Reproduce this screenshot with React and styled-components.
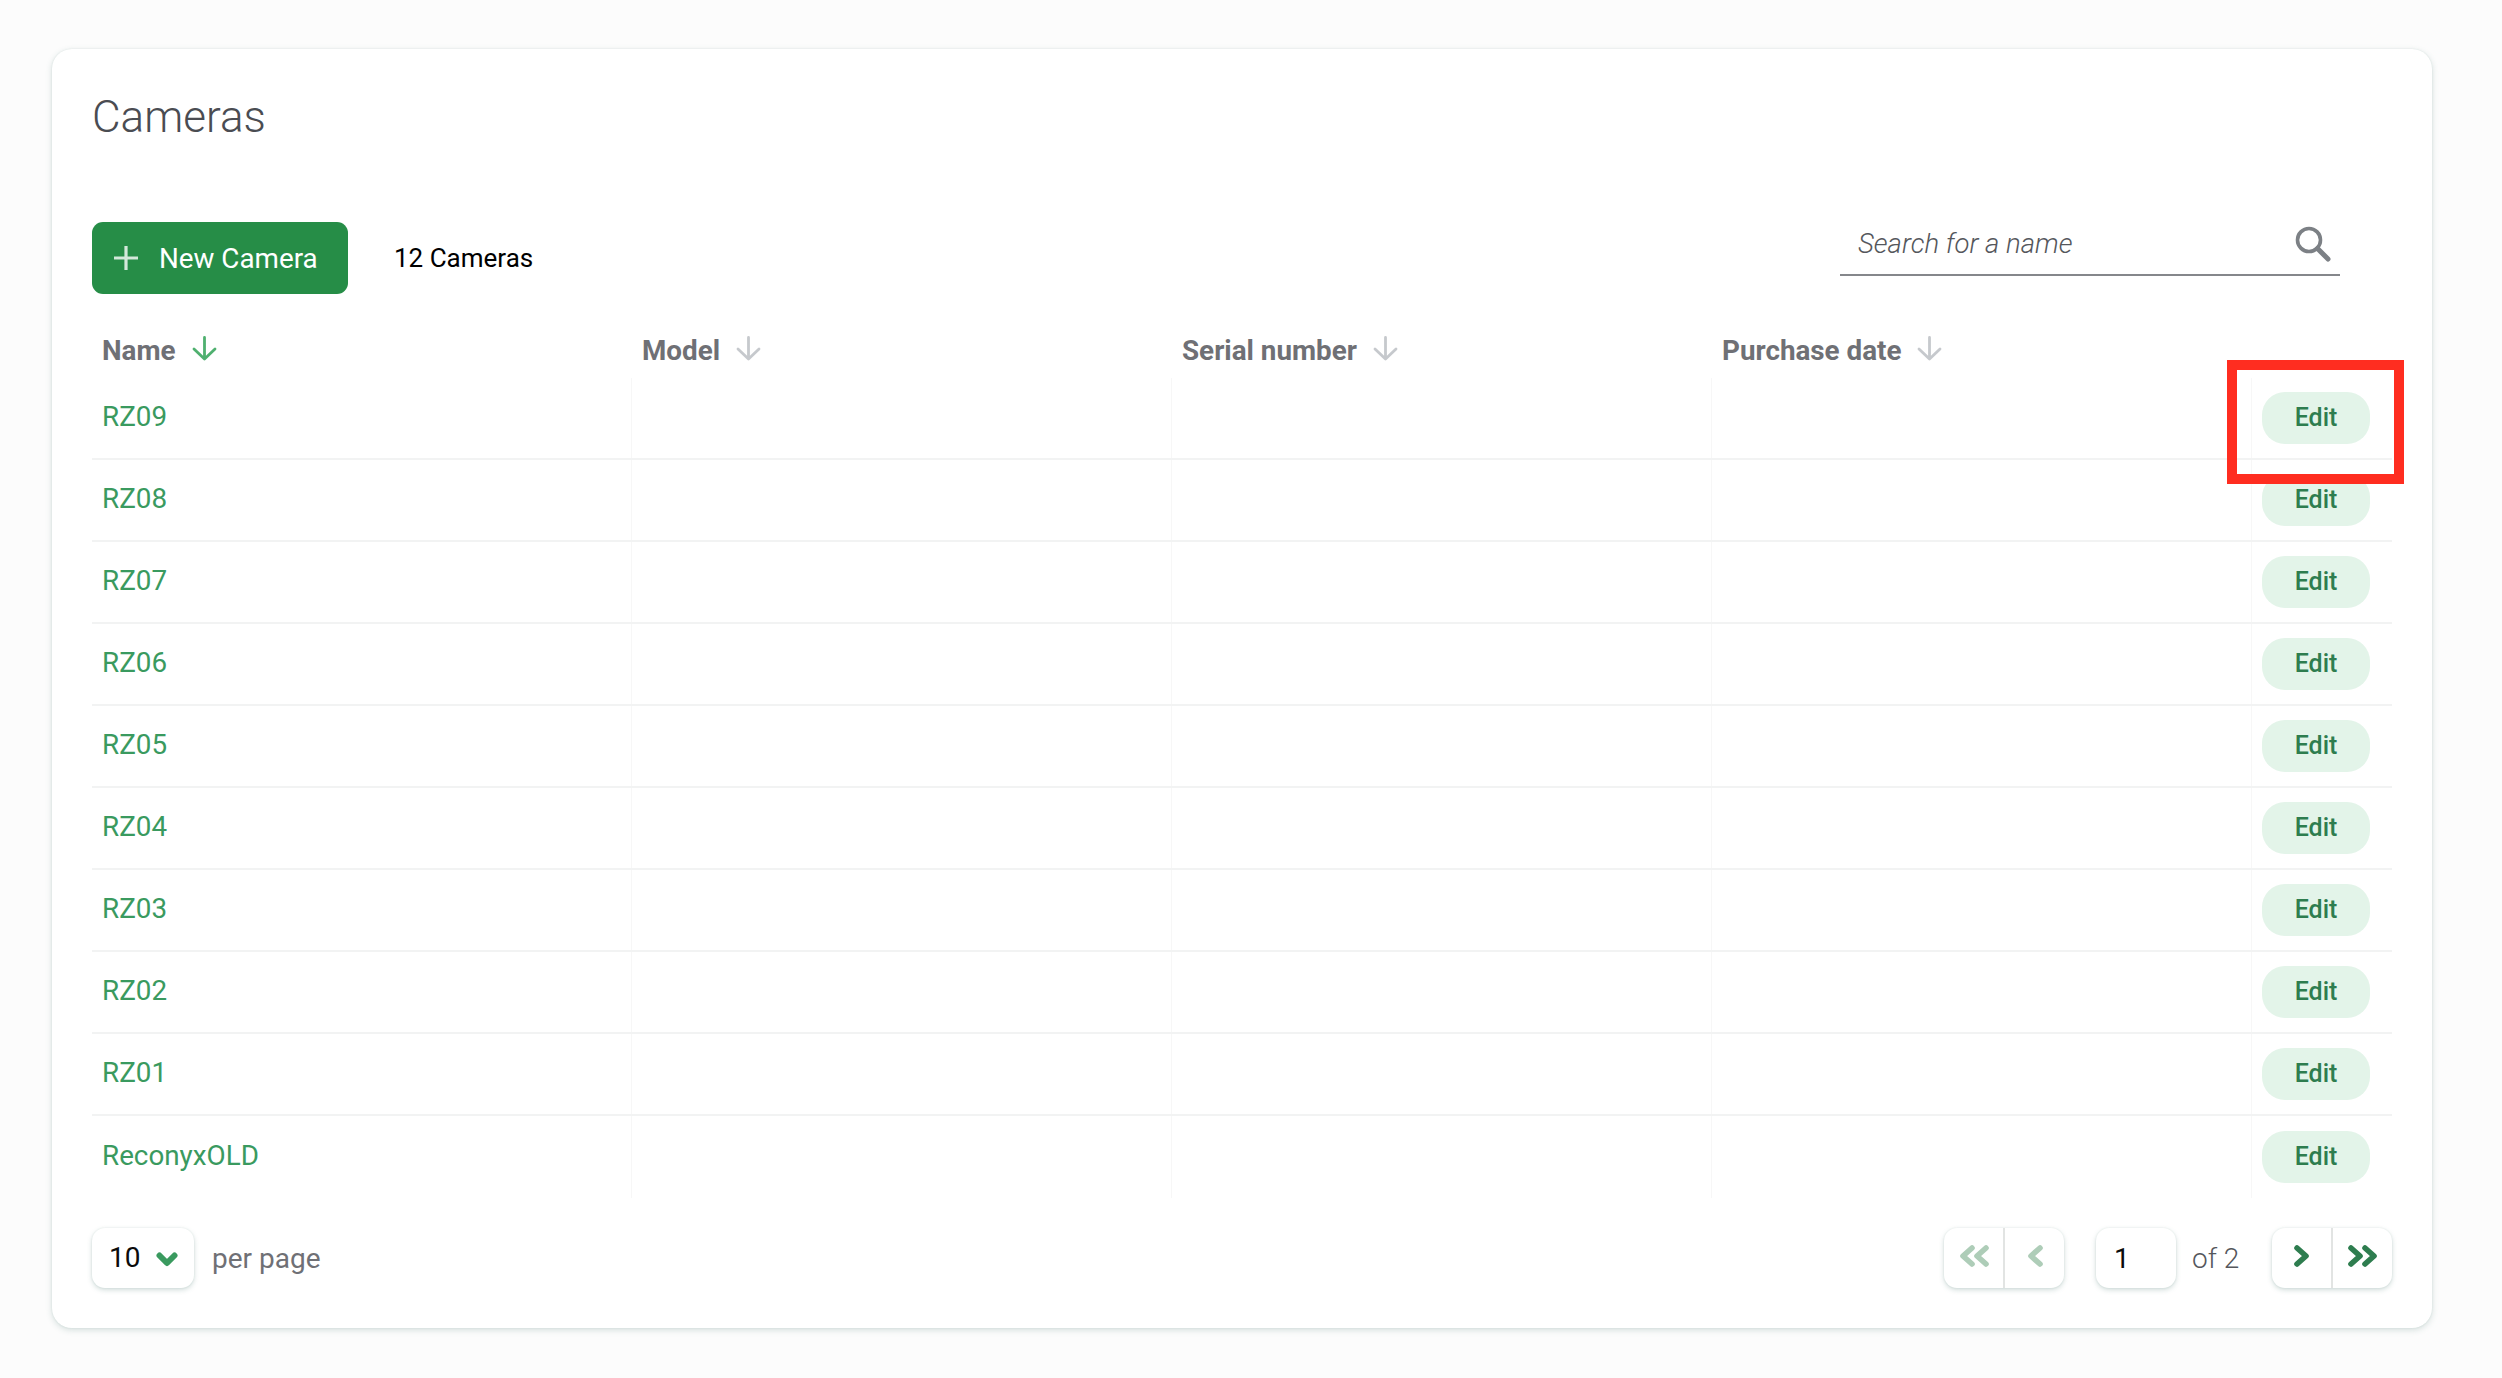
import React from "react";
import styled, { createGlobalStyle } from "styled-components";

const Global = createGlobalStyle`
  html, body { margin: 0; padding: 0; background: #fcfcfc; }
  body { font-family: Roboto, "Liberation Sans", sans-serif; }
`;
const COLUMNS = "539px 540px 540px 540px 141px";
const Page = styled.div`
  width: 2502px; height: 1378px; box-sizing: border-box; padding: 49px 70px 50px 52px; position: relative; overflow: hidden;
`;
const Card = styled.section`
  width: 2380px; height: 1279px; box-sizing: border-box; padding: 40px 40px 40px 40px; background: #fff; border-radius: 20px;
  box-shadow: 0 2px 6px rgba(70, 120, 110, 0.22), 0 0 2px rgba(70, 120, 110, 0.12);
`;
const Title = styled.h1`
  margin: 0 0 77px; height: 56px; line-height: 56px; font-size: 44px; font-weight: 300; color: #4a4c52;
`;
const Toolbar = styled.div`
  display: flex; align-items: flex-start; height: 72px;
`;
const PrimaryButton = styled.button`
  width: 256px; height: 72px; box-sizing: border-box; padding: 0 0 0 22px; display: flex; align-items: center; gap: 21px;
  background: #268d47; color: #fff; border: 0; border-radius: 11px; font: 400 27.8px Roboto, sans-serif;
`;
const Count = styled.span`
  margin-left: 46px; height: 72px; line-height: 72px; font-size: 26px; color: #000;
`;
const Search = styled.div`
  margin-left: auto; margin-right: 52px; width: 500px; height: 54px; box-sizing: border-box; padding: 0 9px 8px 18px;
  border-bottom: 2px solid #85878b; display: flex; align-items: center; justify-content: space-between;
`;
const SearchHint = styled.span`
  font-size: 27.5px; font-style: italic; font-weight: 300; color: #55575c; margin-top: -2px;
`;
const Grid = styled.div`
  display: grid; grid-template-columns: ${COLUMNS}; width: 2300px;
`;
const HeadRow = styled(Grid)`
  height: 84px;
`;
const HeadCell = styled.div`
  box-sizing: border-box; padding: 28px 0 0 ${p => p.$first ? "10px" : "11px"}; display: flex; align-items: center; gap: 16px;
  font-size: 27.8px; font-weight: 700; color: #6f7075;
  svg { margin-top: -4px; }
`;
const HeadLabel = styled.span``;
const Row = styled(Grid)`
  height: 82px; box-sizing: border-box; border-bottom: ${p => p.$last ? "none" : "2px solid #f2f3f3"};
`;
const Cell = styled.div`
  display: flex; align-items: center; box-sizing: border-box; border-left: ${p => p.$first ? "none" : "1px solid #f7f7f7"};
  padding-left: 10px;
`;
const NameLink = styled.a`
  font-size: 27.8px; color: #3a9a5f; margin-top: -3px;
`;
const EditButton = styled.button`
  width: 108px; height: 52px; border: 0; border-radius: 23px; background: #e3f4e9; color: #2e7d4f; font: 500 25px Roboto, sans-serif; padding: 0 0 1px;
`;
const Footer = styled.div`
  display: flex; align-items: center; margin-top: 30px; height: 60px; width: 2300px;
`;
const Raised = styled.div`
  height: 60px; box-sizing: border-box; background: #fff; border-radius: 13px; display: flex; align-items: center;
  box-shadow: 0 2px 5px rgba(70, 120, 110, 0.25), 0 0 2px rgba(70, 120, 110, 0.12);
`;
const PerPage = styled(Raised)`
  width: 102px; padding: 0 16px 2px 17px; justify-content: space-between; font-size: 28px; color: #0b0b0b;
  svg { margin-top: 4px; }
`;
const PerPageLabel = styled.span`
  margin-left: 18px; font-size: 28px; color: #6f7075;
`;
const Pager = styled.div`
  margin-left: auto; display: flex; align-items: center;
`;
const PageGroup = styled(Raised)`
  width: 120px;
`;
const PageBtn = styled.div`
  flex: 1; height: 100%; display: flex; align-items: center; justify-content: center; padding-bottom: 4px; box-sizing: border-box;
  color: ${p => p.$off ? "#aecdb8" : "#2e7d4f"};
  & + & { border-left: 2px solid ${p => p.$off ? "#f0f2f1" : "#e2e4e3"}; }
`;
const PageInput = styled(Raised)`
  width: 80px; margin-left: 32px; padding-left: 18px; font-size: 28px; color: #0b0b0b;
`;
const OfLabel = styled.span`
  margin: 0 33px 0 16px; font-size: 28px; font-weight: 300; color: #55575c; width: 47px; white-space: nowrap;
`;
const Highlight = styled.div`
  position: absolute; left: 2227px; top: 360px; width: 177px; height: 124px; box-sizing: border-box; border: 10px solid #ff2d20; pointer-events: none;
`;

const Plus = () => (
  <svg width="24" height="24" viewBox="0 0 24 24"><path d="M12 0V24M0 12H24" stroke="#fff" strokeOpacity=".8" strokeWidth="3.2" /></svg>
);
const SearchIcon = () => (
  <svg width="36" height="36" viewBox="0 0 36 36" fill="none" stroke="#7c8085"><circle cx="14" cy="14" r="11.5" strokeWidth="3.6"/><path d="M22.5 22.5L33 33" strokeWidth="5" strokeLinecap="round"/></svg>
);
const SortArrow = ({ active }) => (
  <svg width="25" height="25" viewBox="0 0 25 25" fill="none" stroke={active ? "#4fb06f" : "#c6c9cd"} strokeWidth="2.8" strokeLinecap="round" strokeLinejoin="round">
    <path d="M12.5 1.5V23M2 13L12.5 23L23 13"/>
  </svg>
);
const ChevronDown = () => (
  <svg width="22" height="16" viewBox="0 0 22 16" fill="none" stroke="#3a9a5f" strokeWidth="6" strokeLinecap="round" strokeLinejoin="round"><path d="M3.5 4.5L11 12L18.5 4.5"/></svg>
);
const Chevrons = ({ dir, n }) => (
  <svg width={n === 2 ? 30 : 16} height="22" viewBox={`0 0 ${n === 2 ? 30 : 16} 22`} fill="none" stroke="currentColor" strokeWidth="5.6" strokeLinecap="round" strokeLinejoin="round">
    {dir === "left" ? (
      n === 2 ? <path d="M13 3L4 11L13 19M27 3L18 11L27 19"/> : <path d="M13 3L4 11L13 19"/>
    ) : (
      n === 2 ? <path d="M3 3L12 11L3 19M17 3L26 11L17 19"/> : <path d="M3 3L12 11L3 19"/>
    )}
  </svg>
);

const heads = ["Name", "Model", "Serial number", "Purchase date"];
const names = ["RZ09","RZ08","RZ07","RZ06","RZ05","RZ04","RZ03","RZ02","RZ01","ReconyxOLD"];

export default function App() {
  return (
    <Page>
      <Global />
      <Card>
        <Title>Cameras</Title>
        <Toolbar>
          <PrimaryButton><Plus />New Camera</PrimaryButton>
          <Count>12 Cameras</Count>
          <Search><SearchHint>Search for a name</SearchHint><SearchIcon /></Search>
        </Toolbar>
        <HeadRow>
          {heads.map((h, i) => (
            <HeadCell key={h} $first={i === 0}><HeadLabel>{h}</HeadLabel><SortArrow active={i === 0} /></HeadCell>
          ))}
          <div />
        </HeadRow>
        {names.map((n, i) => (
          <Row key={n} $last={i === names.length - 1}>
            <Cell $first><NameLink>{n}</NameLink></Cell>
            <Cell /><Cell /><Cell />
            <Cell><EditButton>Edit</EditButton></Cell>
          </Row>
        ))}
        <Footer>
          <PerPage>10<ChevronDown /></PerPage>
          <PerPageLabel>per page</PerPageLabel>
          <Pager>
            <PageGroup>
              <PageBtn $off><Chevrons dir="left" n={2} /></PageBtn>
              <PageBtn $off><Chevrons dir="left" n={1} /></PageBtn>
            </PageGroup>
            <PageInput>1</PageInput>
            <OfLabel>of 2</OfLabel>
            <PageGroup>
              <PageBtn><Chevrons dir="right" n={1} /></PageBtn>
              <PageBtn><Chevrons dir="right" n={2} /></PageBtn>
            </PageGroup>
          </Pager>
        </Footer>
      </Card>
      <Highlight />
    </Page>
  );
}
